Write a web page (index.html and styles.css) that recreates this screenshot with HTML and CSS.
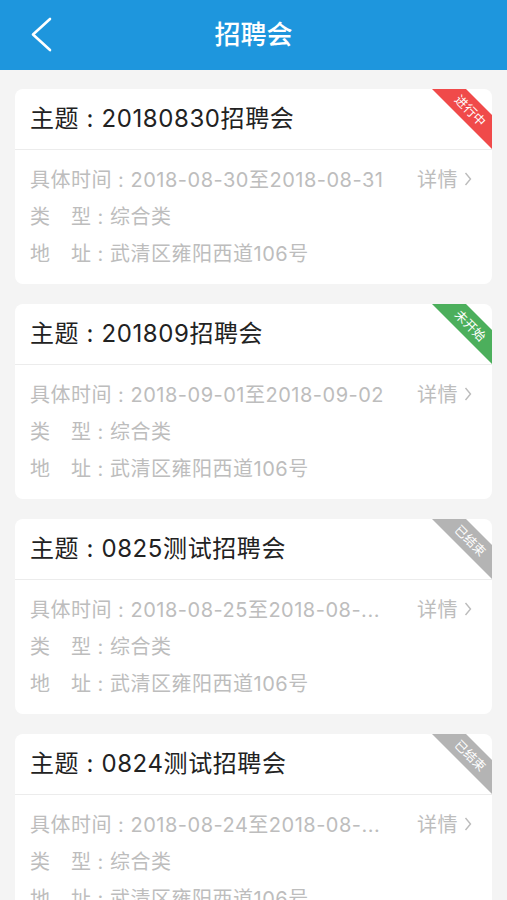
FILE: index.html
```html
<!DOCTYPE html>
<html lang="zh-CN">
<head>
<meta charset="utf-8">
<title>招聘会</title>
<link rel="stylesheet" href="styles.css">
</head>
<body>
<header class="nav">
  <a class="back" href="#" aria-label="返回">
    <svg width="24" height="36" viewBox="0 0 24 36"><polyline points="20,2 3,17.5 20,33" fill="none" stroke="#fff" stroke-width="2.6" stroke-linecap="round" stroke-linejoin="round"/></svg>
  </a>
  <h1 class="nav-title">招聘会</h1>
  <span class="nav-spacer"></span>
</header>

<main class="list">
  <article class="card">
    <div class="card-head"><h2 class="card-title">主题 : 20180830招聘会</h2></div>
    <svg class="ribbon" width="60" height="60" viewBox="0 0 60 60"><polygon points="0,0 34,0 60,26 60,60" fill="#f04a4a"/><text x="39" y="21" transform="rotate(45 39 21)" text-anchor="middle" dominant-baseline="central" class="ribbon-text">进行中</text></svg>
    <div class="card-body">
      <div class="row"><span class="row-text">具体时间 : 2018-08-30至2018-08-31</span><span class="more">详情<svg width="8" height="14" viewBox="0 0 8 14"><polyline points="1.5,1 6.5,7 1.5,13" fill="none" stroke="#bcbcbc" stroke-width="1.4"/></svg></span></div>
      <div class="row">类　型 : 综合类</div>
      <div class="row">地　址 : 武清区雍阳西道106号</div>
    </div>
  </article>

  <article class="card">
    <div class="card-head"><h2 class="card-title">主题 : 201809招聘会</h2></div>
    <svg class="ribbon" width="60" height="60" viewBox="0 0 60 60"><polygon points="0,0 34,0 60,26 60,60" fill="#4caf5c"/><text x="39" y="21" transform="rotate(45 39 21)" text-anchor="middle" dominant-baseline="central" class="ribbon-text">未开始</text></svg>
    <div class="card-body">
      <div class="row"><span class="row-text">具体时间 : 2018-09-01至2018-09-02</span><span class="more">详情<svg width="8" height="14" viewBox="0 0 8 14"><polyline points="1.5,1 6.5,7 1.5,13" fill="none" stroke="#bcbcbc" stroke-width="1.4"/></svg></span></div>
      <div class="row">类　型 : 综合类</div>
      <div class="row">地　址 : 武清区雍阳西道106号</div>
    </div>
  </article>

  <article class="card">
    <div class="card-head"><h2 class="card-title">主题 : 0825测试招聘会</h2></div>
    <svg class="ribbon" width="60" height="60" viewBox="0 0 60 60"><polygon points="0,0 34,0 60,26 60,60" fill="#b4b4b4"/><text x="39" y="21" transform="rotate(45 39 21)" text-anchor="middle" dominant-baseline="central" class="ribbon-text">已结束</text></svg>
    <div class="card-body">
      <div class="row"><span class="row-text">具体时间 : 2018-08-25至2018-08-...</span><span class="more">详情<svg width="8" height="14" viewBox="0 0 8 14"><polyline points="1.5,1 6.5,7 1.5,13" fill="none" stroke="#bcbcbc" stroke-width="1.4"/></svg></span></div>
      <div class="row">类　型 : 综合类</div>
      <div class="row">地　址 : 武清区雍阳西道106号</div>
    </div>
  </article>

  <article class="card">
    <div class="card-head"><h2 class="card-title">主题 : 0824测试招聘会</h2></div>
    <svg class="ribbon" width="60" height="60" viewBox="0 0 60 60"><polygon points="0,0 34,0 60,26 60,60" fill="#b4b4b4"/><text x="39" y="21" transform="rotate(45 39 21)" text-anchor="middle" dominant-baseline="central" class="ribbon-text">已结束</text></svg>
    <div class="card-body">
      <div class="row"><span class="row-text">具体时间 : 2018-08-24至2018-08-...</span><span class="more">详情<svg width="8" height="14" viewBox="0 0 8 14"><polyline points="1.5,1 6.5,7 1.5,13" fill="none" stroke="#bcbcbc" stroke-width="1.4"/></svg></span></div>
      <div class="row">类　型 : 综合类</div>
      <div class="row">地　址 : 武清区雍阳西道106号</div>
    </div>
  </article>
</main>
</body>
</html>
```

FILE: styles.css
```css
* { box-sizing: border-box; }

html, body {
  margin: 0;
  padding: 0;
  background: #f4f4f4;
  font-family: Inter, "Noto Sans CJK SC", sans-serif;
  overflow: hidden;
}

.nav {
  height: 70px;
  background: #1e96dd;
  display: grid;
  grid-template-columns: 1fr auto 1fr;
  align-items: center;
}

.back {
  display: flex;
  align-items: center;
  padding-left: 30px;
  height: 100%;
}

.back svg { display: block; }

.nav-title {
  margin: 0;
  color: #fff;
  font-size: 26px;
  font-weight: 500;
  line-height: 1;
}

.list {
  padding: 19px 15px 0;
  display: flex;
  flex-direction: column;
  gap: 20px;
}

.card {
  position: relative;
  background: #fff;
  border-radius: 8px;
  overflow: hidden;
  flex: none;
}

.card-head {
  height: 61px;
  padding-left: 15px;
  display: flex;
  align-items: center;
  border-bottom: 1px solid #ececec;
}

.card-title {
  margin: 0;
  font-size: 24px;
  font-weight: 400;
  color: #222;
  line-height: 1;
  letter-spacing: 0.6px;
}

.ribbon {
  position: absolute;
  top: 0;
  right: 0;
  display: block;
}

.ribbon-text {
  fill: #fff;
  font-size: 12.5px;
  font-family: "Noto Sans CJK SC", sans-serif;
}

.card-body {
  padding: 10px 20px 13px 15px;
}

.row {
  height: 37px;
  display: flex;
  align-items: center;
  font-size: 20px;
  color: #bdbdbd;
  white-space: pre;
  letter-spacing: 0.5px;
}

.row-text {
  flex: 1;
  min-width: 0;
  overflow: hidden;
  text-overflow: ellipsis;
}

.more {
  display: flex;
  align-items: center;
  gap: 6px;
  margin-left: 20px;
}

.more svg { display: block; }
```
